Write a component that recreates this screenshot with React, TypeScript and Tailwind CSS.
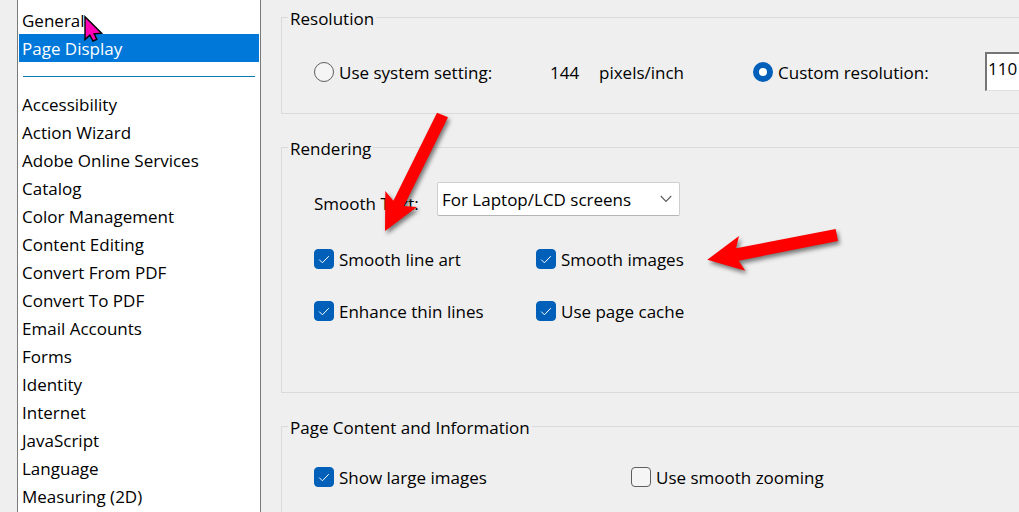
import { useState } from "react";

const topCategories = ["General", "Page Display"];

const categories = [
  "Accessibility",
  "Action Wizard",
  "Adobe Online Services",
  "Catalog",
  "Color Management",
  "Content Editing",
  "Convert From PDF",
  "Convert To PDF",
  "Email Accounts",
  "Forms",
  "Identity",
  "Internet",
  "JavaScript",
  "Language",
  "Measuring (2D)",
];

function CategoryButton({
  name,
  active,
  onSelect,
}: {
  name: string;
  active: boolean;
  onSelect: (name: string) => void;
}) {
  return (
    <button
      type="button"
      onClick={() => onSelect(name)}
      className={`block w-full h-7 pl-[3px] pt-px text-left leading-7 whitespace-nowrap ${
        active ? "bg-[#0078d9] text-white" : "text-black"
      }`}
    >
      {name}
    </button>
  );
}

function CheckOption({
  label,
  defaultChecked = false,
}: {
  label: string;
  defaultChecked?: boolean;
}) {
  return (
    <label className="flex items-center gap-[5px] h-7 whitespace-nowrap">
      <span className="relative size-5 shrink-0">
        <input
          type="checkbox"
          defaultChecked={defaultChecked}
          className="peer block size-5 appearance-none rounded border border-[#5f5f5f] bg-[#f5f5f5] checked:border-[#005fb8] checked:bg-[#005fb8]"
        />
        <svg
          viewBox="0 0 20 20"
          className="absolute inset-0 hidden size-5 pointer-events-none peer-checked:block"
          fill="none"
          stroke="white"
          strokeWidth="1"
        >
          <path d="M5.2 10.6 8.4 13.8 14.8 7.2" />
        </svg>
      </span>
      <span className="pt-0.5">{label}</span>
    </label>
  );
}

function RadioOption({
  label,
  checked,
  onChange,
}: {
  label: string;
  checked: boolean;
  onChange: () => void;
}) {
  return (
    <label className="flex items-center gap-[5px] whitespace-nowrap">
      <input
        type="radio"
        name="resolution"
        checked={checked}
        onChange={onChange}
        className="block size-5 shrink-0 appearance-none rounded-full border border-[#5f5f5f] bg-[#f5f5f5] checked:border-[6px] checked:border-[#005fb8] checked:bg-white"
      />
      <span className="pt-0.5">{label}</span>
    </label>
  );
}

export default function App() {
  const [category, setCategory] = useState("Page Display");
  const [custom, setCustom] = useState(true);

  return (
    <div className="relative flex h-screen overflow-hidden bg-[#efefef] pl-[17px] font-['Open_Sans','Noto_Sans',sans-serif] text-[17px] leading-7 text-black">
      <nav className="w-[244px] shrink-0 border-x border-[#7a7a7a] bg-white px-px pt-[6px]">
        {topCategories.map((name) => (
          <CategoryButton
            key={name}
            name={name}
            active={category === name}
            onSelect={setCategory}
          />
        ))}
        <div className="flex h-7 items-center px-1">
          <hr className="w-full border-t border-[#0a7ab0]" />
        </div>
        {categories.map((name) => (
          <CategoryButton
            key={name}
            name={name}
            active={category === name}
            onSelect={setCategory}
          />
        ))}
      </nav>

      <main className="flex min-w-0 flex-1 flex-col gap-[19px] pl-5 pt-[3px]">
        <fieldset className="min-w-0 border-y border-l border-[#dadada] pl-[6px]">
          <legend className="px-0.5 pt-1 leading-6">Resolution</legend>
          <div className="flex h-[39px] items-center ml-[26px] mt-[21px] mb-[22px]">
            <div className="w-[236px] shrink-0">
              <RadioOption
                label="Use system setting:"
                checked={!custom}
                onChange={() => setCustom(false)}
              />
            </div>
            <span className="w-[49px] shrink-0 pt-0.5">144</span>
            <span className="w-[154px] shrink-0 pt-0.5">pixels/inch</span>
            <div className="w-[232px] shrink-0">
              <RadioOption
                label="Custom resolution:"
                checked={custom}
                onChange={() => setCustom(true)}
              />
            </div>
            <input
              type="text"
              aria-label="Custom resolution in pixels per inch"
              defaultValue="110"
              className="h-full min-w-0 flex-1 border-l-2 border-t-2 border-b border-l-[#757575] border-t-[#757575] border-b-[#e0e0e0] bg-white pb-2 pl-px outline-none"
            />
          </div>
        </fieldset>

        <fieldset className="min-w-0 border-y border-l border-[#dadada] pl-[6px]">
          <legend className="px-0.5 pt-1 leading-6">Rendering</legend>
          <div className="ml-[26px] mt-[21px] mb-[67px]">
            <div className="flex items-end">
              <label
                htmlFor="smooth-text"
                className="w-[123px] shrink-0 leading-6"
              >
                Smooth Text:
              </label>
              <div className="relative w-[243px]">
                <select
                  id="smooth-text"
                  defaultValue="lcd"
                  className="block h-[34px] w-full appearance-none rounded-xs border border-[#cfcfcf] border-b-[#b5b5b5] bg-white pl-1 pt-0.5 outline-none"
                >
                  <option value="none">None</option>
                  <option value="monitor">For Monitor</option>
                  <option value="lcd">For Laptop/LCD screens</option>
                </select>
                <svg
                  viewBox="0 0 12 8"
                  className="absolute right-2 top-[13px] h-2 w-3 pointer-events-none"
                  fill="none"
                  stroke="#5c5c5c"
                  strokeWidth="1.1"
                >
                  <path d="M.8 1 6 6.4 11.2 1" />
                </svg>
              </div>
            </div>
            <div className="mt-[29px] grid grid-cols-[222px_auto] justify-start gap-y-6">
              <CheckOption label="Smooth line art" defaultChecked />
              <CheckOption label="Smooth images" defaultChecked />
              <CheckOption label="Enhance thin lines" defaultChecked />
              <CheckOption label="Use page cache" defaultChecked />
            </div>
          </div>
        </fieldset>

        <fieldset className="min-w-0 flex-1 border-l border-t border-[#dadada] pl-[6px]">
          <legend className="px-0.5 pt-1 leading-6">
            Page Content and Information
          </legend>
          <div className="ml-[26px] mt-[23px] grid grid-cols-[317px_auto] justify-start">
            <CheckOption label="Show large images" defaultChecked />
            <CheckOption label="Use smooth zooming" />
          </div>
        </fieldset>
      </main>

      {/* Mouse pointer */}
      <svg
        viewBox="0 0 24 30"
        className="absolute left-[82px] top-[13px] h-[30px] w-6 pointer-events-none"
      >
        <path
          d="M3 3.8V26.6L7.8 22.2 11 28 14.8 26.4 12.2 20.8 19.6 20.2Z"
          fill="#ff00b4"
          stroke="black"
          strokeWidth="1.4"
        />
      </svg>

      {/* Callout arrows */}
      <svg
        viewBox="0 0 80 136"
        className="absolute left-[378px] top-[106px] h-[136px] w-20 pointer-events-none drop-shadow-[2px_3px_2px_rgba(0,0,0,0.5)]"
      >
        <path
          d="M59 6.7 70 11.3 26 100 39 101 7 125 7.3 85 15.4 94.7Z"
          fill="#fe0000"
        />
      </svg>
      <svg
        viewBox="0 0 150 60"
        className="absolute left-[700px] top-[220px] h-[60px] w-[150px] pointer-events-none drop-shadow-[2px_3px_2px_rgba(0,0,0,0.5)]"
      >
        <path
          d="M135.7 9 138 21 38.7 40.7 45.3 50.7 7.3 39.7 39 16 36 28.3Z"
          fill="#fe0000"
        />
      </svg>
    </div>
  );
}
